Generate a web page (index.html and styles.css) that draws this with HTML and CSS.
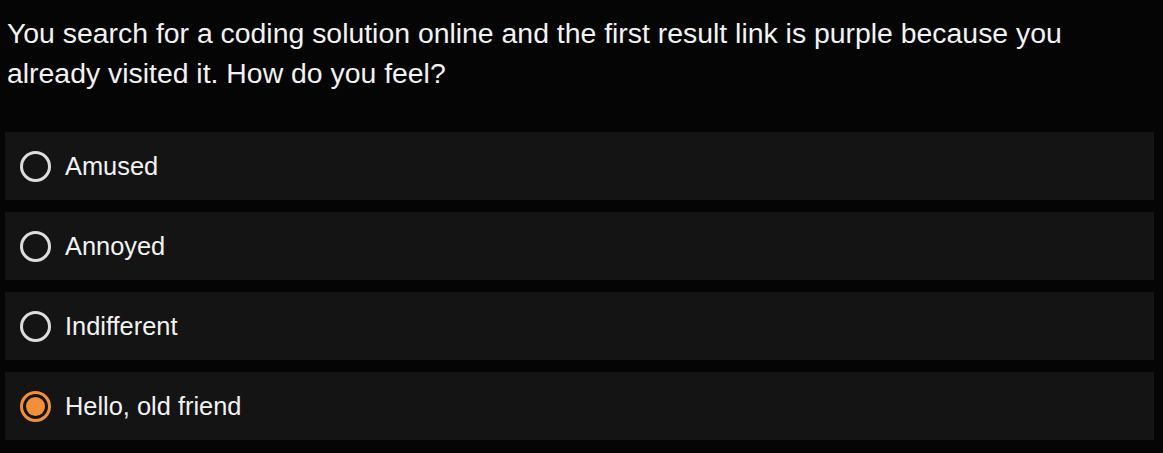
FILE: index.html
```html
<!DOCTYPE html>
<html>
<head>
  <title>Poll</title>
  <link rel="stylesheet" href="styles.css">
</head>
<body>
  <div class="poll">
    <p class="question">You search for a coding solution online and the first result link is purple because you already visited it. How do you feel?</p>

    <!-- answer options -->
    <label class="option">
      <input type="radio" name="feel" value="amused">
      <span class="dot"></span>
      <span class="text">Amused</span>
    </label>
    <label class="option">
      <input type="radio" name="feel" value="annoyed">
      <span class="dot"></span>
      <span class="text">Annoyed</span>
    </label>
    <label class="option">
      <input type="radio" name="feel" value="indifferent">
      <span class="dot"></span>
      <span class="text">Indifferent</span>
    </label>
    <label class="option">
      <input type="radio" name="feel" value="friend" checked>
      <span class="dot"></span>
      <span class="text">Hello, old friend</span>
    </label>
  </div>
</body>
</html>
```

FILE: styles.css
```css
body {
  margin: 0;
  background-color: #050505;
  font-family: "Liberation Sans", Arial, sans-serif;
  color: #f2f2f2;
}

.poll {
  padding: 13px 9px 0 5px;
}

.question {
  max-width: 1100px;
  margin: 0 0 39px 2px;
  font-size: 28.4px;
  line-height: 40px;
}

/* options */
.option {
  display: flex;
  align-items: center;
  height: 68px;
  margin-bottom: 12px;
  padding-left: 15px;
  background-color: #141414;
  cursor: pointer;
}

.option input {
  display: none;
}

.dot {
  box-sizing: border-box;
  width: 31px;
  height: 31px;
  border: 3px solid #dcdcdc;
  border-radius: 50%;
  margin-right: 14px;
  position: relative;
}

.option input:checked + .dot {
  border-color: #f28f3b;
}

.option input:checked + .dot:after {
  content: "";
  position: absolute;
  top: 3px;
  left: 3px;
  width: 19px;
  height: 19px;
  border-radius: 50%;
  background-color: #f28f3b;
}

.text {
  font-size: 25.4px;
}
```
